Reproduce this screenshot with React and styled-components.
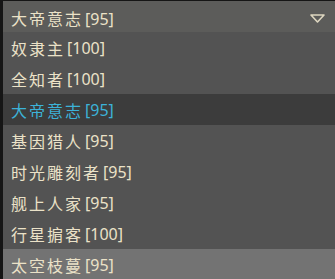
import * as React from 'react';
import styled, { createGlobalStyle } from 'styled-components';

const GlobalStyle = createGlobalStyle`
  html, body {
    margin: 0;
    padding: 0;
    background: #151515;
  }
`;

const Dropdown = styled.div`
  width: 332px;
  margin-left: 3px;
  padding-top: 1px;
  font-family: "Noto Sans", "Noto Sans CJK SC", sans-serif;
  font-size: 16px;
  color: #ebe2c8;
`;

const Header = styled.div`
  height: 31px;
  background: #5c5c5a;
  display: flex;
  align-items: center;
  justify-content: space-between;
  padding: 3px 10px 0 8px;
  box-sizing: border-box;
`;

const List = styled.div`
  display: flex;
  flex-direction: column;
  background: #535353;
`;

const Item = styled.div`
  height: 31px;
  display: flex;
  align-items: center;
  padding-left: 8px;
  background: ${(p) => (p.$selected ? '#3c3c3c' : p.$hover ? '#737373' : 'transparent')};
  color: ${(p) => (p.$selected ? '#3cb2d8' : '#ebe2c8')};
`;

const Name = styled.span`
  letter-spacing: 2px;
  margin-right: 2px;
`;

const Count = styled.span``;

const Arrow = () => (
  <svg width="15" height="9" viewBox="0 0 15 9">
    <path d="M1 1 L14 1 L7.5 8 Z" fill="none" stroke="#ddd6c0" strokeWidth="1.6" strokeLinejoin="round" />
  </svg>
);

const items = [
  ['奴隶主', 100],
  ['全知者', 100],
  ['大帝意志', 95],
  ['基因猎人', 95],
  ['时光雕刻者', 95],
  ['舰上人家', 95],
  ['行星掮客', 100],
  ['太空枝蔓', 95],
];

export default function App() {
  return (
    <>
      <GlobalStyle />
      <Dropdown>
        <Header>
          <span>
            <Name>大帝意志</Name>
            <Count>[95]</Count>
          </span>
          <Arrow />
        </Header>
        <List>
          {items.map(([name, n], i) => (
            <Item key={name} $selected={i === 2} $hover={i === 7}>
              <Name>{name}</Name>
              <Count>[{n}]</Count>
            </Item>
          ))}
        </List>
      </Dropdown>
    </>
  );
}
